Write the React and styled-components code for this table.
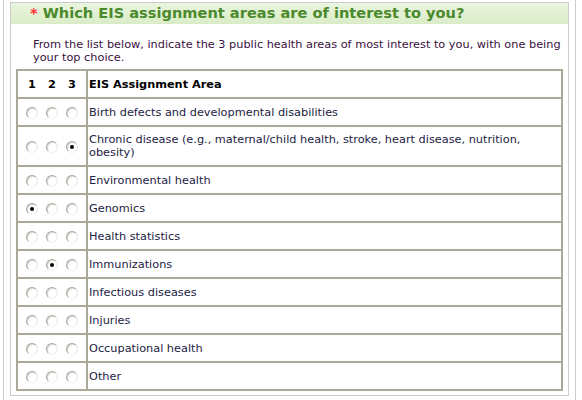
import React, { useState } from 'react';
import styled, { createGlobalStyle } from 'styled-components';

const GlobalStyle = createGlobalStyle`
  html, body {
    margin: 0;
    padding: 0;
    background: #ffffff;
  }
  body {
    font-family: "DejaVu Sans", Verdana, sans-serif;
  }
`;

const AREAS = [
  'Birth defects and developmental disabilities',
  'Chronic disease (e.g., maternal/child health, stroke, heart disease, nutrition, obesity)',
  'Environmental health',
  'Genomics',
  'Health statistics',
  'Immunizations',
  'Infectious diseases',
  'Injuries',
  'Occupational health',
  'Other',
];

const Frame = styled.div`
  box-sizing: border-box;
  width: 573px;
  height: 400px;
  margin-left: 3px;
  padding: 2px 6px 0;
  border-left: 1px solid #cccccc;
  border-right: 1px solid #cccccc;
`;

const QuestionBox = styled.div`
  border: 1px solid #cccccc;
  padding-bottom: 4px;
`;

const Header = styled.div`
  height: 21px;
  line-height: 20px;
  padding-left: 19px;
  background: linear-gradient(#eaf5e0, #d9ecc7);
  color: #4b8a2c;
  font-size: 14.6px;
  font-weight: bold;
  white-space: nowrap;
`;

const Required = styled.span`
  color: #ff3333;
  margin-right: 5px;
`;

const Description = styled.p`
  margin: 14px 0 0;
  padding: 0 0 0 22px;
  font-size: 11.3px;
  line-height: 13px;
  color: #3a1040;
`;

const Table = styled.table`
  margin: 5px 5px 0;
  width: 547px;
  border-collapse: separate;
  border-spacing: 0;
  border: 1px solid #aca899;
`;

const HeadCell = styled.th`
  border: 1px solid #aca899;
  height: 26px;
  padding: 0 ${(p) => (p.$left ? '1px' : '2px')};
  font-size: 11.3px;
  font-weight: bold;
  color: #000000;
  text-align: ${(p) => (p.$left ? 'left' : 'center')};
  width: ${(p) => (p.$narrow ? '64px' : 'auto')};
  white-space: nowrap;
`;

const Digit = styled.span`
  display: inline-block;
  width: 20px;
  text-align: center;
`;

const Cell = styled.td`
  border: 1px solid #aca899;
  height: ${(p) => (p.$tall ? '38px' : '26px')};
  padding: 0 ${(p) => (p.$center ? '2px' : '1px')};
  font-size: 11.3px;
  line-height: 13px;
  color: #222244;
  text-align: ${(p) => (p.$center ? 'center' : 'left')};
  white-space: ${(p) => (p.$center ? 'nowrap' : 'normal')};
`;

const RadioSlot = styled.span`
  display: inline-flex;
  width: 20px;
  justify-content: center;
  vertical-align: middle;
`;

const Radio = styled.input.attrs({ type: 'radio' })`
  appearance: none;
  box-sizing: border-box;
  width: 12px;
  height: 12px;
  margin: 0;
  border-radius: 50%;
  border: 1px solid;
  border-color: #a8a8a2 #e6e4dc #f2f1ec #a8a8a2;
  background: #ffffff;
  box-shadow: inset 1px 1px 0 #d8d6ce;
  position: relative;
  cursor: pointer;

  &:checked::after {
    content: '';
    position: absolute;
    left: 3px;
    top: 3px;
    width: 4px;
    height: 4px;
    border-radius: 50%;
    background: #000000;
  }
`;

const App = () => {
  const [choice, setChoice] = useState({ 1: 3, 2: 5, 3: 1 });

  const pick = (rank, row) => setChoice((c) => ({ ...c, [rank]: row }));

  return (
    <>
      <GlobalStyle />
      <Frame>
        <QuestionBox>
          <Header>
            <Required>*</Required>Which EIS assignment areas are of interest to you?
          </Header>
          <Description>
            From the list below, indicate the 3 public health areas of most interest to you, with one being
            your top choice.
          </Description>
          <Table>
            <thead>
              <tr>
                <HeadCell $narrow>
                  <Digit>1</Digit>
                  <Digit>2</Digit>
                  <Digit>3</Digit>
                </HeadCell>
                <HeadCell $left>EIS Assignment Area</HeadCell>
              </tr>
            </thead>
            <tbody>
              {AREAS.map((area, i) => (
                <tr key={area}>
                  <Cell $center $tall={i === 1}>
                    {[1, 2, 3].map((rank) => (
                      <RadioSlot key={rank}>
                        <Radio
                          name={`rank${rank}`}
                          checked={choice[rank] === i}
                          onChange={() => pick(rank, i)}
                        />
                      </RadioSlot>
                    ))}
                  </Cell>
                  <Cell $tall={i === 1}>{area}</Cell>
                </tr>
              ))}
            </tbody>
          </Table>
        </QuestionBox>
      </Frame>
    </>
  );
};

export default App;
